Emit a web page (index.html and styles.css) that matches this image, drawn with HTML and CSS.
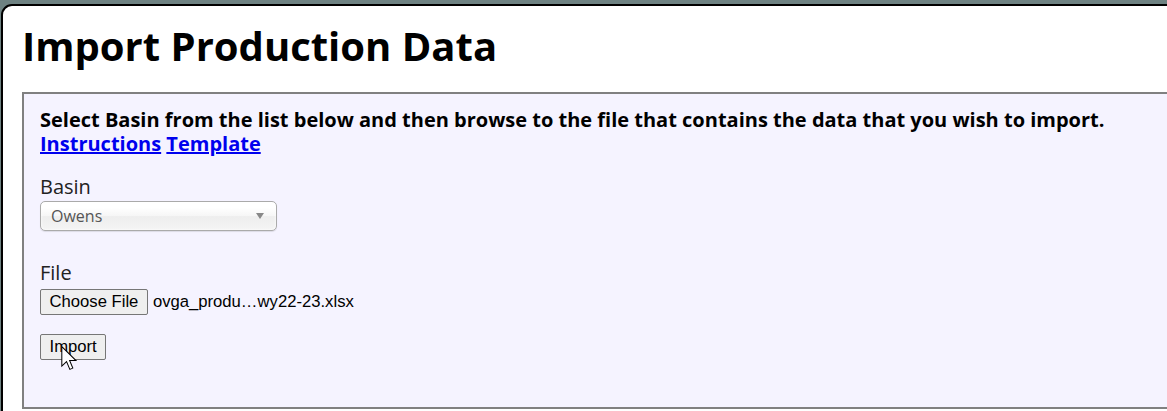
FILE: index.html
```html
<!DOCTYPE html>
<html>
<head>
<meta charset="utf-8">
<link rel="stylesheet" href="styles.css">
</head>
<body>
<div class="page">
  <h1 class="title">Import Production Data</h1>
  <div class="panel">
    <p class="intro">Select Basin from the list below and then browse to the file that contains the data that you wish to import.<br><a href="#" class="link">Instructions</a> <a href="#" class="link">Template</a></p>
    <div class="field">
      <label class="label">Basin</label>
      <div class="select"><span class="select-text">Owens</span><span class="select-arrow"></span></div>
    </div>
    <div class="field file-field">
      <label class="label">File</label>
      <div class="file-row"><button class="btn">Choose File</button><span class="file-name">ovga_produ…wy22-23.xlsx</span></div>
    </div>
    <div class="actions">
      <button class="btn btn-import">Import</button>
      <svg class="cursor" width="17" height="26" viewBox="0 0 14 22"><path d="M0.5 0.5 L0.5 17 L4.5 13.2 L7.3 19.8 L9.8 18.7 L7.1 12.3 L12.5 12.3 Z" fill="#fff" stroke="#000" stroke-width="0.85" stroke-linejoin="miter"/></svg>
    </div>
  </div>
</div>
</body>
</html>
```
FILE: styles.css
```css
html, body {
  margin: 0;
  padding: 0;
}
body {
  background: #6e8282;
  overflow: hidden;
  height: 411px;
  font-family: "Open Sans", sans-serif;
}
.page {
  margin: 4px 0 0 1px;
  width: 1220px;
  height: 420px;
  background: #fff;
  border: 2px solid #000;
  border-top-left-radius: 11px;
  padding-left: 19px;
  box-sizing: border-box;
}
.title {
  margin: 13px 0 19px 0;
  font-size: 40px;
  font-weight: 700;
  line-height: 54px;
  color: #000;
}
.panel {
  width: 1200px;
  height: 317px;
  box-sizing: border-box;
  border: 2px solid #808080;
  background: #f5f3ff;
  padding: 14px 16px 0 16px;
}
.intro {
  margin: 0;
  font-size: 20px;
  font-weight: 700;
  line-height: 24px;
  color: #000;
}
.link {
  color: #0000ee;
  text-decoration: underline;
}
.field {
  margin-top: 17px;
  display: flex;
  flex-direction: column;
  align-items: flex-start;
}
.file-field {
  margin-top: 28px;
}
.label {
  font-size: 20px;
  line-height: 27px;
  color: #222;
}
.select {
  margin-top: 1px;
  width: 237px;
  height: 30px;
  box-sizing: border-box;
  border: 1px solid #aaa;
  border-radius: 5px;
  background: linear-gradient(#fff 20%, #f6f6f6 50%, #eee 52%, #f4f4f4 100%);
  box-shadow: 0 0 3px #fff inset, 0 1px 1px rgba(0,0,0,0.1);
  display: flex;
  align-items: center;
  justify-content: space-between;
  padding: 0 12px 0 10px;
}
.select-text {
  font-size: 16px;
  color: #555;
}
.select-arrow {
  width: 0;
  height: 0;
  border-left: 4px solid transparent;
  border-right: 4px solid transparent;
  border-top: 6px solid #888;
}
.file-row {
  margin-top: 3px;
  display: flex;
  align-items: center;
  gap: 5px;
}
.btn {
  font-family: "Liberation Sans", Arial, sans-serif;
  font-size: 16.67px;
  color: #000;
  background: #efefef;
  border: 1px solid #767676;
  border-radius: 2px;
  padding: 0 8.5px;
  height: 26px;
  line-height: 24px;
}
.file-name {
  font-family: "Liberation Sans", Arial, sans-serif;
  font-size: 16.67px;
  color: #000;
}
.actions {
  margin-top: 19px;
  position: relative;
  display: flex;
}
.cursor {
  position: absolute;
  left: 21px;
  top: 12px;
}
```
